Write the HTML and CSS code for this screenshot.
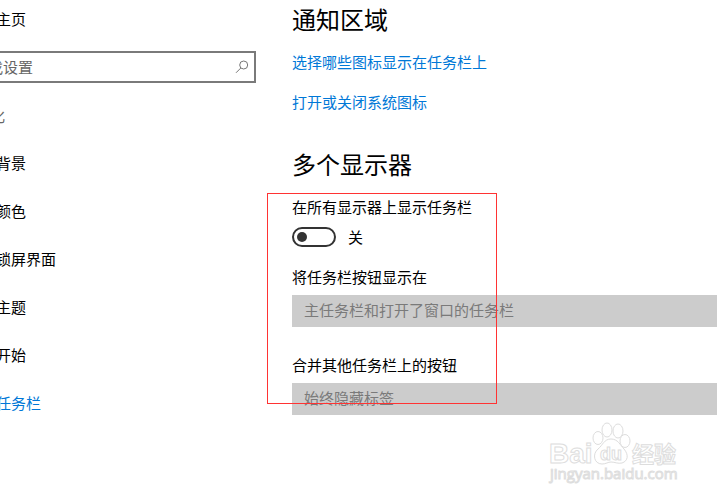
FILE: index.html
```html
<!DOCTYPE html>
<html lang="zh-CN">
<head>
<meta charset="utf-8">
<title>设置</title>
<link rel="stylesheet" href="styles.css">
</head>
<body>
<div class="window">
  <nav class="sidebar">
    <a class="nav-item home" href="#">主页</a>
    <div class="search">
      <input class="search-input" type="text" placeholder="查找设置" aria-label="查找设置">
      <svg class="search-icon" viewBox="0 0 14 14" aria-hidden="true"><circle cx="8.7" cy="5" r="4"/><path d="M5.8 8 1 12.8"/></svg>
    </div>
    <h2 class="category">个性化</h2>
    <a class="nav-item" href="#">背景</a>
    <a class="nav-item" href="#">颜色</a>
    <a class="nav-item" href="#">锁屏界面</a>
    <a class="nav-item" href="#">主题</a>
    <a class="nav-item" href="#">开始</a>
    <a class="nav-item current" href="#">任务栏</a>
  </nav>
  <main class="content">
    <section class="notifications">
      <h1 class="heading">通知区域</h1>
      <a class="link" href="#">选择哪些图标显示在任务栏上</a>
      <a class="link" href="#">打开或关闭系统图标</a>
    </section>
    <section>
      <h1 class="heading">多个显示器</h1>
      <div class="displays">
        <label class="label" for="all-displays">在所有显示器上显示任务栏</label>
        <div class="toggle-row">
          <input class="toggle" type="checkbox" role="switch" id="all-displays">
          <span>关</span>
        </div>
        <label class="label" for="buttons-on">将任务栏按钮显示在</label>
        <select class="select" id="buttons-on" disabled><option>主任务栏和打开了窗口的任务栏</option></select>
        <label class="label" for="combine">合并其他任务栏上的按钮</label>
        <select class="select" id="combine" disabled><option>始终隐藏标签</option></select>
        <div class="marker"></div>
      </div>
    </section>
  </main>
  <svg class="watermark" viewBox="0 0 132 66" role="img" aria-label="Baidu 经验">
    <g class="paw">
      <ellipse cx="50" cy="17" rx="5" ry="6.5"/>
      <ellipse cx="59" cy="9" rx="5" ry="7"/>
      <ellipse cx="70" cy="10" rx="5" ry="7"/>
      <ellipse cx="77" cy="20" rx="5" ry="6.5"/>
      <path d="M63 18C56 18 55 24 50 28C44 33 46 43 54 43C58 43 60 41 63 41C67 41 70 43 74 42C80 40 81 34 76 28C72 24 70 18 63 18Z"/>
    </g>
    <text class="wm-bai" x="1" y="42">Bai</text>
    <text class="wm-du" x="52" y="39">du</text>
    <text class="wm-cn" x="84" y="41">经验</text>
    <text class="wm-url" x="2" y="58">jingyan.baidu.com</text>
  </svg>
</div>
</body>
</html>
```

FILE: styles.css
```css
* {
  box-sizing: border-box;
}

body {
  margin: 0;
  background: #fff;
  color: #000;
  font: 15px/20px "Noto Sans CJK SC", sans-serif;
  overflow: hidden;
}

.window {
  position: relative;
  display: flex;
  min-height: 100vh;
  overflow: hidden;
}

/* The navigation pane is scrolled partly past the left edge. */
.sidebar {
  flex: none;
  display: flex;
  flex-direction: column;
  width: 296px;
  margin-left: -40px;
}

.nav-item {
  padding: 14px 0 14px 36px;
  color: #000;
  text-decoration: none;
}

.home {
  padding: 9px 0 0 36px;
}

.current {
  color: #0078d7;
}

.search {
  position: relative;
  margin: 22px 0 23px;
}

.search-input {
  display: block;
  width: 100%;
  height: 32px;
  padding: 0 36px 2px 11px;
  border: 2px solid #7a7a7a;
  border-radius: 0;
  background: #fff;
  font: inherit;
}

.search-input::placeholder {
  color: #666;
  opacity: 1;
}

.search-icon {
  position: absolute;
  right: 7px;
  top: 9px;
  width: 14px;
  height: 14px;
  fill: none;
  stroke: #777;
}

.category {
  margin: 0 0 13px;
  color: #666;
  font-size: 15px;
  font-weight: 400;
}

.content {
  flex: 1;
  min-width: 0;
  padding-left: 36px;
}

.heading {
  margin: 0;
  font-size: 24px;
  font-weight: 400;
  line-height: 38px;
}

.notifications {
  display: flex;
  flex-direction: column;
  align-items: flex-start;
  gap: 20px;
  padding-bottom: 33px;
}

.notifications .heading {
  margin-bottom: -6px;
}

.link {
  color: #0078d7;
  text-decoration: none;
}

.displays {
  position: relative;
  padding-top: 14px;
}

.label {
  display: block;
}

.toggle-row {
  display: flex;
  align-items: center;
  gap: 12px;
  margin: 10px 0 20px;
}

.toggle {
  appearance: none;
  display: flex;
  align-items: center;
  width: 44px;
  height: 20px;
  margin: 0;
  padding-left: 3px;
  border: 2px solid #333;
  border-radius: 10px;
}

.toggle::before {
  content: "";
  width: 10px;
  height: 10px;
  border-radius: 50%;
  background: #333;
}

.toggle:checked {
  justify-content: flex-end;
  padding: 0 3px 0 0;
}

.select {
  appearance: none;
  display: block;
  width: 100%;
  height: 32px;
  margin: 8px 0 28px;
  padding: 0 12px 2px;
  border: 0;
  border-radius: 0;
  background: #ccc;
  color: #7a7a7a;
  font: inherit;
  opacity: 1;
}

.marker {
  position: absolute;
  left: -25px;
  top: 10px;
  width: 230px;
  height: 211px;
  border: 1px solid #f33;
  pointer-events: none;
}

.watermark {
  position: absolute;
  right: 37px;
  bottom: 12px;
  width: 132px;
  height: 66px;
  fill: #fff;
  stroke: #ddd;
  stroke-width: 1px;
  font-family: "Liberation Sans", sans-serif;
}

.wm-bai {
  font-size: 28px;
  font-weight: 700;
}

.wm-du {
  font-size: 18px;
  font-weight: 700;
}

.wm-cn {
  font: 700 22px "Noto Sans CJK SC", sans-serif;
}

.wm-url {
  font: 15px "Open Sans", sans-serif;
}
```
